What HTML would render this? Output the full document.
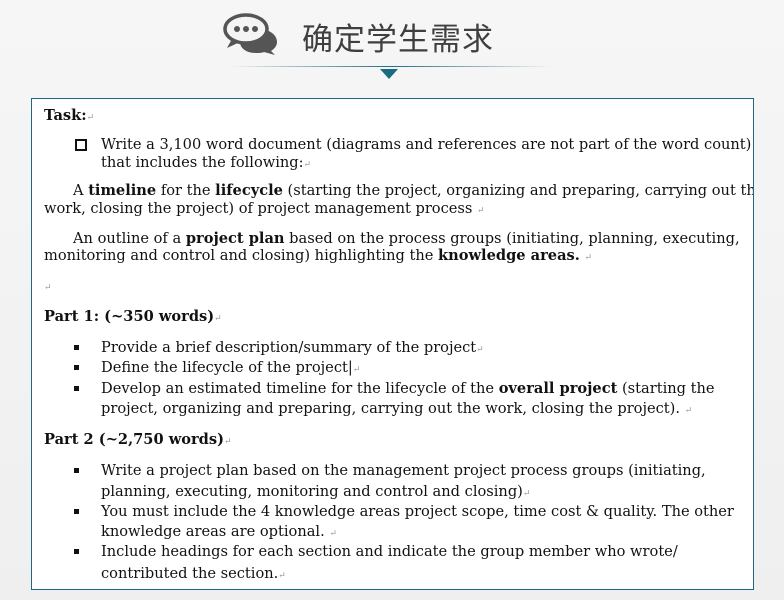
<!DOCTYPE html>
<html><head><meta charset="utf-8"><style>
body{margin:0;width:784px;height:600px;overflow:hidden;background:linear-gradient(#f6f6f6,#efefef);font-family:"DejaVu Serif","Liberation Serif",serif;color:#111;position:relative}
.title{position:absolute;left:302px;top:14px;font:31px "Noto Sans CJK SC",sans-serif;color:#3f3f3f;letter-spacing:1px}
.line{position:absolute;left:230px;top:66px;width:322px;height:1px;background:linear-gradient(90deg,rgba(31,110,130,0),#1f6e82 50%,rgba(31,110,130,0))}
.tri{position:absolute;left:380px;top:69px;width:0;height:0;border-left:9px solid transparent;border-right:9px solid transparent;border-top:10px solid #1b6a80}
.box{position:absolute;left:31px;top:98px;width:721px;height:490px;background:#fff;border:1px solid #1d6a80;overflow:hidden}
.box div{position:absolute;white-space:nowrap;font-size:14.6px;line-height:16px}
.r{color:#999;font-size:9px}
.sq{position:absolute;width:8px;height:8px;border:2.5px solid #111}
.b{position:absolute;width:5px;height:5px;background:#111}
</style></head><body>
<svg style="position:absolute;left:222px;top:12px" width="58" height="44" viewBox="0 0 58 44">
<path d="M30 16 C46 16 55 22 55 30 C55 34 52 37 49 39 L53 43 L42 40 C40 41 36 41 34 41 C24 41 18 36 18 30 Z" fill="#555"/>
<ellipse cx="24" cy="17" rx="21" ry="14" fill="#f4f4f4" stroke="#555" stroke-width="3.5"/>
<path d="M10 27 L5 36 L18 30 Z" fill="#555"/>
<circle cx="15" cy="17" r="3" fill="#555"/><circle cx="24" cy="17" r="3" fill="#555"/><circle cx="33" cy="17" r="3" fill="#555"/>
</svg>
<div class="title">确定学生需求</div>
<div class="line"></div><div class="tri"></div>
<div class="box">
<div style="left:12px;top:9px"><b>Task:</b><span class="r">↵</span></div>
<span class="sq" style="left:43px;top:40px"></span>
<div style="left:69px;top:38px">Write a 3,100 word document (diagrams and references are not part of the word count)</div>
<div style="left:69px;top:56px">that includes the following:<span class="r">↵</span></div>
<div style="left:41px;top:84px">A <b>timeline</b> for the <b>lifecycle</b> (starting the project, organizing and preparing, carrying out the</div>
<div style="left:12px;top:102px">work, closing the project) of project management process <span class="r">↵</span></div>
<div style="left:41px;top:132px">An outline of a <b>project plan</b> based on the process groups (initiating, planning, executing,</div>
<div style="left:12px;top:149px">monitoring and control and closing) highlighting the <b>knowledge areas.</b> <span class="r">↵</span></div>
<div style="left:12px;top:179px"><span class="r">↵</span></div>
<div style="left:12px;top:210px"><b>Part 1: (~350 words)</b><span class="r">↵</span></div>
<span class="b" style="left:42px;top:246px"></span>
<div style="left:69px;top:241px">Provide a brief description/summary of the project<span class="r">↵</span></div>
<span class="b" style="left:42px;top:266px"></span>
<div style="left:69px;top:261px">Define the lifecycle of the project|<span class="r">↵</span></div>
<span class="b" style="left:42px;top:287px"></span>
<div style="left:69px;top:282px">Develop an estimated timeline for the lifecycle of the <b>overall project</b> (starting the</div>
<div style="left:69px;top:302px">project, organizing and preparing, carrying out the work, closing the project). <span class="r">↵</span></div>
<div style="left:12px;top:333px"><b>Part 2 (~2,750 words)</b><span class="r">↵</span></div>
<span class="b" style="left:42px;top:369px"></span>
<div style="left:69px;top:364px">Write a project plan based on the management project process groups (initiating,</div>
<div style="left:69px;top:385px">planning, executing, monitoring and control and closing)<span class="r">↵</span></div>
<span class="b" style="left:42px;top:410px"></span>
<div style="left:69px;top:405px">You must include the 4 knowledge areas project scope, time cost &amp; quality. The other</div>
<div style="left:69px;top:425px">knowledge areas are optional. <span class="r">↵</span></div>
<span class="b" style="left:42px;top:450px"></span>
<div style="left:69px;top:445px">Include headings for each section and indicate the group member who wrote/</div>
<div style="left:69px;top:467px">contributed the section.<span class="r">↵</span></div>
</div>
</body></html>
